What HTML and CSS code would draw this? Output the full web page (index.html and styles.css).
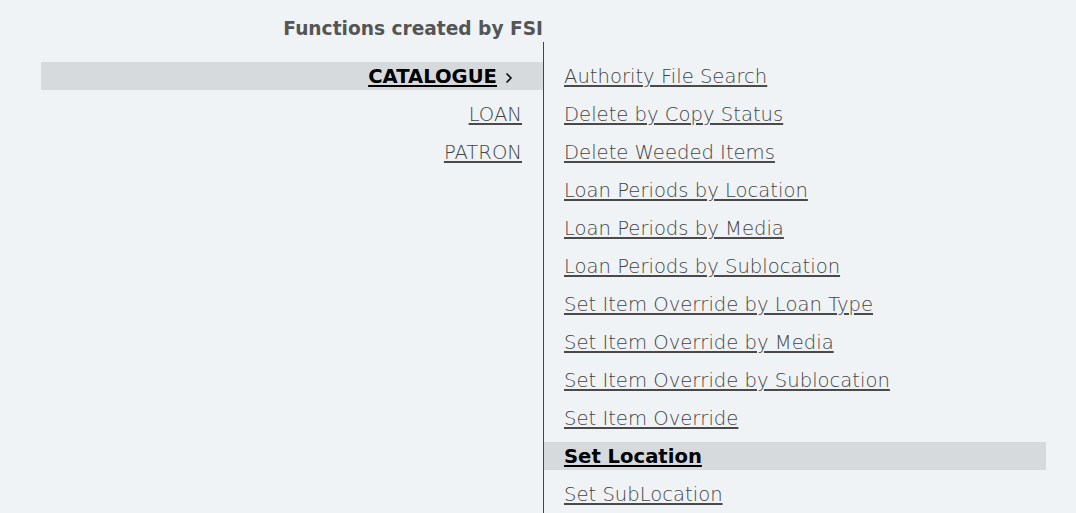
FILE: index.html
```html
<!DOCTYPE html>
<html>
<head>
<meta charset="utf-8">
<link rel="stylesheet" href="styles.css">
</head>
<body>
<div class="page">
  <div class="left">
    <h2 class="title">Functions created by FSI</h2>
    <ul class="cats">
      <li class="cat active"><a href="#">CATALOGUE</a><svg class="chev" width="8" height="12" viewBox="0 0 8 12"><polyline points="1.5,1.5 6,6 1.5,10.5" fill="none" stroke="#111" stroke-width="1.6"/></svg></li>
      <li class="cat"><a href="#">LOAN</a></li>
      <li class="cat"><a href="#">PATRON</a></li>
    </ul>
  </div>
  <div class="right">
    <ul class="funcs">
      <li class="fn"><a href="#">Authority File Search</a></li>
      <li class="fn"><a href="#">Delete by Copy Status</a></li>
      <li class="fn"><a href="#">Delete Weeded Items</a></li>
      <li class="fn"><a href="#">Loan Periods by Location</a></li>
      <li class="fn"><a href="#">Loan Periods by Media</a></li>
      <li class="fn"><a href="#">Loan Periods by Sublocation</a></li>
      <li class="fn"><a href="#">Set Item Override by Loan Type</a></li>
      <li class="fn"><a href="#">Set Item Override by Media</a></li>
      <li class="fn"><a href="#">Set Item Override by Sublocation</a></li>
      <li class="fn"><a href="#">Set Item Override</a></li>
      <li class="fn active"><a href="#">Set Location</a></li>
      <li class="fn"><a href="#">Set SubLocation</a></li>
    </ul>
  </div>
</div>
</body>
</html>
```
FILE: styles.css
```css
html, body {
  margin: 0;
  padding: 0;
  background: #eff3f6;
  height: 100%;
  overflow: hidden;
}
body {
  font-family: "DejaVu Sans", "Open Sans", sans-serif;
  font-weight: 300;
  color: #444;
}
.page {
  display: flex;
  padding-left: 41px;
  height: 100%;
}
.left {
  width: 502px;
  display: flex;
  flex-direction: column;
}
.title {
  margin: 0;
  height: 42px;
  box-sizing: border-box;
  padding-top: 16px;
  text-align: right;
  font-size: 18.6px;
  font-weight: 700;
  line-height: 26px;
  color: #555;
}
ul {
  list-style: none;
  margin: 0;
  padding: 0;
}
.cats {
  padding-top: 20px;
}
.cat {
  height: 28px;
  line-height: 29px;
  margin-bottom: 10px;
  text-align: right;
  padding-right: 21px;
  font-size: 19.6px;
}
.cat a, .fn a {
  color: #444;
  text-decoration: underline;
  text-decoration-thickness: 2px;
  text-underline-offset: 2px;
  text-decoration-color: #4a4a4a;
}
.cat.active {
  background: #d6dadd;
  padding-right: 30px;
}
.cat.active a, .fn.active a {
  color: #000;
  font-weight: 700;
  text-decoration-color: #000;
}
.chev {
  margin-left: 8px;
  vertical-align: -1px;
}
.right {
  border-left: 1px solid #444;
  margin-top: 42px;
  width: 502px;
}
.funcs {
  padding-top: 20px;
}
.fn {
  height: 28px;
  line-height: 29px;
  margin-bottom: 10px;
  padding-left: 20px;
  font-size: 19.6px;
}
.fn.active {
  background: #d6dadd;
}
```
